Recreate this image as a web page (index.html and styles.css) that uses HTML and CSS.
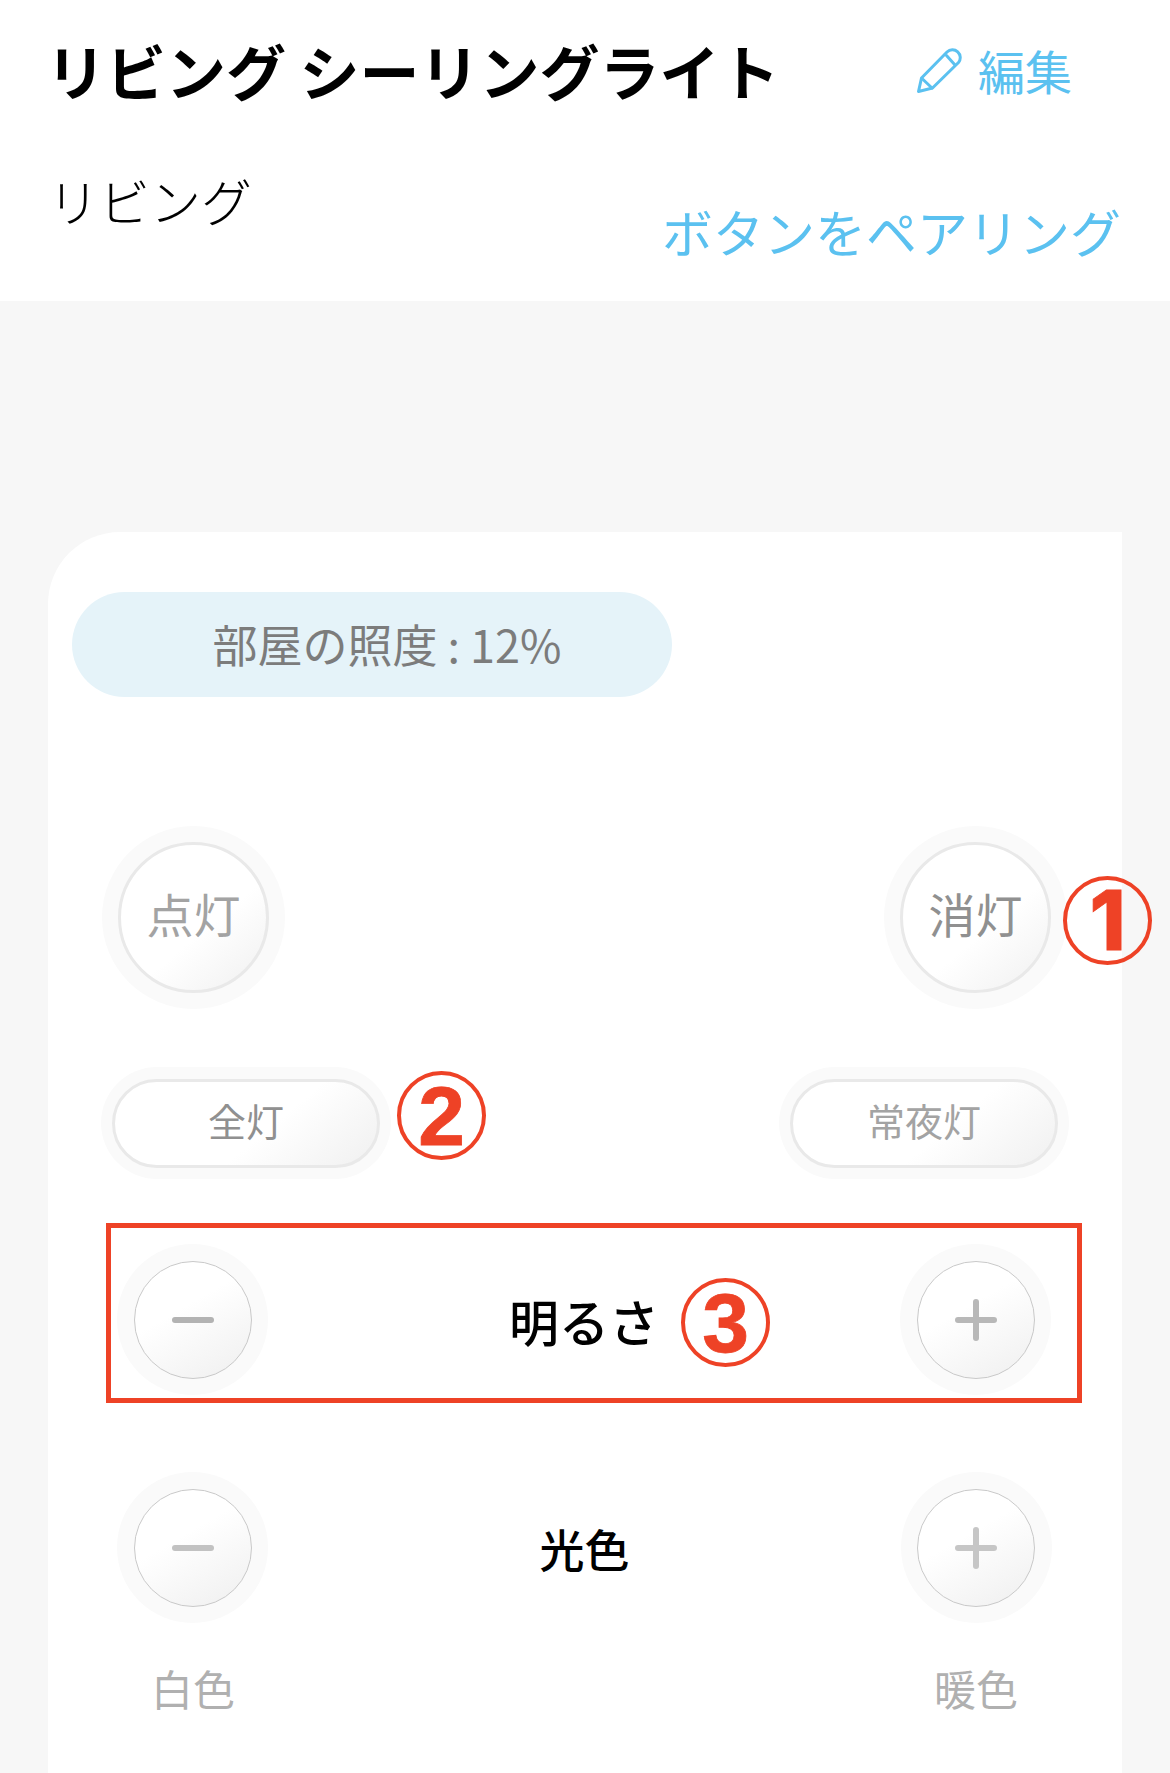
FILE: index.html
```html
<!DOCTYPE html>
<html lang="ja">
<head>
<meta charset="utf-8">
<title>リビング シーリングライト</title>
<link rel="stylesheet" href="styles.css">
</head>
<body>
<header class="header">
  <div class="title-row">
    <h1 class="title">リビング シーリングライト</h1>
    <a class="edit">
      <svg class="pencil" viewBox="0 0 46 46" fill="none" stroke="#5bc1f0" stroke-width="3" stroke-linejoin="round" stroke-linecap="round">
        <path d="M2.5 44.5 L5.5 31 L31 5 A7.8 7.8 0 0 1 42.5 15.5 L16.5 41 Z"/>
        <path d="M6 31.5 L16 41"/>
        <path d="M30.5 8.5 L39 18"/>
      </svg>
      <span>編集</span>
    </a>
  </div>
  <div class="sub-row">
    <div class="room">リビング</div>
    <a class="pair">ボタンをペアリング</a>
  </div>
</header>
<main class="card">
  <div class="lux">部屋の照度 : 12%</div>

  <div class="row row-power">
    <div class="halo halo-lg"><div class="btn btn-lg">点灯</div></div>
    <div class="halo halo-lg"><div class="btn btn-lg btn-dark">消灯</div></div>
  </div>

  <div class="row row-mode">
    <div class="halo halo-pill"><div class="btn btn-pill btn-dark">全灯</div></div>
    <div class="halo halo-pill"><div class="btn btn-pill">常夜灯</div></div>
  </div>

  <div class="row row-bright">
    <div class="halo halo-sm"><div class="btn btn-sm"><span class="minus"></span></div></div>
    <div class="label label-wide">明るさ</div>
    <div class="halo halo-sm"><div class="btn btn-sm"><span class="plus"></span></div></div>
  </div>

  <div class="row row-color">
    <div class="halo halo-sm"><div class="btn btn-sm"><span class="minus minus-light"></span></div></div>
    <div class="label">光色</div>
    <div class="halo halo-sm"><div class="btn btn-sm"><span class="plus plus-light"></span></div></div>
  </div>

  <div class="row row-caption">
    <div class="caption">白色</div>
    <div class="caption">暖色</div>
  </div>

  <div class="mark mark-1"><span class="mark-one">1</span></div>
  <div class="mark mark-2">2</div>
  <div class="mark mark-3">3</div>
</main>
</body>
</html>
```
FILE: styles.css
```css
* { box-sizing: border-box; }
html, body { margin: 0; padding: 0; }
body {
  width: 1170px;
  height: 1773px;
  overflow: hidden;
  background: #f7f7f7;
  font-family: "Noto Sans CJK JP", "Noto Sans", sans-serif;
}
.header {
  height: 301px;
  background: #fff;
  padding: 34px 49px 0 46px;
}
.title-row {
  display: flex;
  justify-content: space-between;
  align-items: center;
  height: 72px;
  padding-right: 49px;
}
.title {
  margin: 0;
  font-size: 60px;
  line-height: 72px;
  font-weight: 700;
  color: #000;
  white-space: nowrap;
}
.edit {
  display: flex;
  align-items: center;
  gap: 16px;
  color: #5bc1f0;
  font-size: 47px;
  line-height: 60px;
  font-weight: 400;
}
.pencil { width: 46px; height: 46px; }
.sub-row {
  display: flex;
  justify-content: space-between;
  align-items: flex-start;
  margin-top: 64px;
}
.room {
  margin-left: 2px;
  font-size: 51px;
  line-height: 60px;
  font-weight: 300;
  color: #000;
}
.pair {
  margin-top: 31px;
  font-size: 51px;
  line-height: 60px;
  color: #5bc1f0;
  font-weight: 400;
  white-space: nowrap;
}
.card {
  position: relative;
  margin: 231px 0 0 48px;
  width: 1074px;
  height: 1241px;
  background: #fff;
  border-top-left-radius: 72px;
  padding-top: 60px;
}
.lux {
  display: flex;
  align-items: center;
  justify-content: center;
  margin-left: 24px;
  width: 600px;
  height: 105px;
  padding: 0 0 3px 30px;
  border-radius: 53px;
  background: #e5f3f9;
  color: #7c7c7c;
  font-size: 45px;
  font-weight: 400;
}
.row {
  display: flex;
  align-items: flex-start;
  justify-content: space-between;
}
.row-power { margin: 129px 55px 0 54px; }
.row-mode { margin: 58px 53px 0 53px; }
.row-bright {
  margin: 44px 40px 0 58px;
  height: 180px;
  border: 5px solid #ee4226;
  padding: 16px 26px 0 6px;
}
.row-color { margin: 69px 70px 0 69px; }
.row-caption { margin: 37px 104px 0 103px; }
.halo {
  display: flex;
  align-items: center;
  justify-content: center;
  flex: none;
  background: #fafafa;
  border-radius: 50%;
}
.halo-lg { width: 183px; height: 183px; }
.halo-pill { width: 290px; height: 112px; border-radius: 56px; }
.halo-sm { width: 151px; height: 151px; }
.btn {
  display: flex;
  align-items: center;
  justify-content: center;
  background: linear-gradient(140deg, #fff 58%, #f0f0f0 100%);
  border-radius: 50%;
  color: #a3a3a3;
}
.btn-lg {
  width: 151px;
  height: 151px;
  border: 3px solid #e9e9e9;
  font-size: 47px;
  padding-bottom: 11px;
}
.btn-pill {
  width: 268px;
  height: 89px;
  border-radius: 45px;
  border: 3px solid #e9e9e9;
  font-size: 38px;
  padding-bottom: 8px;
}
.btn-dark { color: #909090; }
.btn-sm {
  width: 118px;
  height: 118px;
  border: 1px solid #c9c9c9;
  background: linear-gradient(150deg, #fff 40%, #efefef 100%);
  position: relative;
}
.minus {
  display: block;
  width: 42px;
  height: 6px;
  border-radius: 3px;
  background: #b3b3b3;
}
.minus-light { background: #c2c2c2; }
.plus {
  display: block;
  position: relative;
  width: 42px;
  height: 42px;
}
.plus::before, .plus::after {
  content: "";
  position: absolute;
  background: #b8b8b8;
  border-radius: 3px;
}
.plus::before { left: 0; right: 0; top: 18px; height: 6px; }
.plus::after { top: 0; bottom: 0; left: 18px; width: 6px; }
.plus-light::before, .plus-light::after { background: #c6c6c6; }
.label {
  align-self: center;
  margin-top: 3px;
  color: #000;
  font-size: 45px;
  line-height: 60px;
  font-weight: 500;
}
.label-wide { font-size: 50px; margin-top: -2px; }
.caption {
  color: #b0b0b0;
  font-size: 42px;
  line-height: 56px;
}
.mark {
  position: absolute;
  width: 89px;
  height: 89px;
  display: flex;
  align-items: center;
  justify-content: center;
  border: 4px solid #ee4226;
  border-radius: 50%;
  color: #ee4226;
  font-family: "Liberation Sans", sans-serif;
  font-weight: 700;
  font-size: 84px;
  line-height: 1;
  -webkit-text-stroke: 0.8px #ee4226;
}
.mark-one {
  font-family: "Inter", sans-serif;
  font-weight: 800;
  font-size: 82px;
}
.mark-1 { left: 1015px; top: 344px; }
.mark-2 { left: 349px; top: 539px; }
.mark-3 { left: 633px; top: 746px; }
```
